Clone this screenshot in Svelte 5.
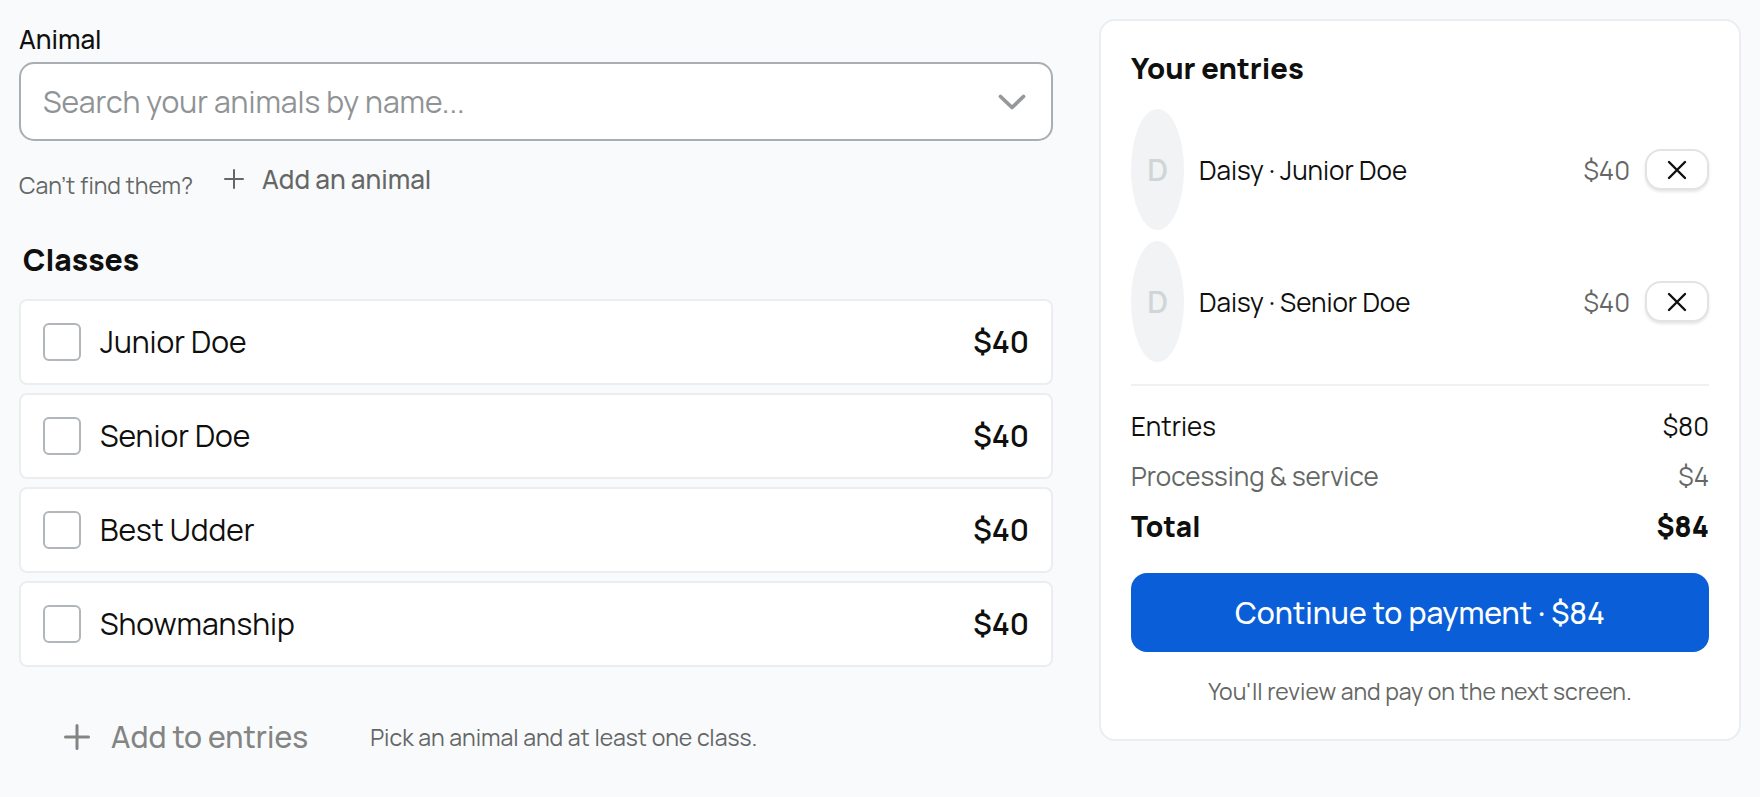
<script>
  let classes = $state([
    { id: 'junior', name: 'Junior Doe', price: 40, checked: false },
    { id: 'senior', name: 'Senior Doe', price: 40, checked: false },
    { id: 'udder', name: 'Best Udder', price: 40, checked: false },
    { id: 'showmanship', name: 'Showmanship', price: 40, checked: false }
  ]);
  const entries = [
    { animal: 'Daisy', className: 'Junior Doe', price: 40 },
    { animal: 'Daisy', className: 'Senior Doe', price: 40 }
  ];
  const subtotal = entries.reduce((sum, e) => sum + e.price, 0);
  const fee = 4;
</script>

<main class="page">
  <form class="picker" onsubmit={(e) => e.preventDefault()}>
    <label class="field-label" for="animal">Animal</label>
    <div class="combo">
      <input id="animal" type="text" role="combobox" aria-expanded="false" aria-controls="animal-list" placeholder="Search your animals by name..." />
      <svg class="chevron" viewBox="0 0 28 16" aria-hidden="true"><path d="M2.5 2.5 14 13.5 25.5 2.5" /></svg>
    </div>
    <div class="missing">
      <span class="small">Can’t find them?</span>
      <button type="button" class="ghost">
        <svg class="plus" viewBox="0 0 20 20" aria-hidden="true"><path d="M10 1V19M1 10H19" /></svg>
        Add an animal
      </button>
    </div>

    <h2 class="classes-title">Classes</h2>
    <ul class="classes">
      {#each classes as c (c.id)}
        <li>
          <label class="class-row" for={c.id}>
            <input id={c.id} type="checkbox" bind:checked={c.checked} />
            <span class="class-name">{c.name}</span>
            <span class="class-price">${c.price}</span>
          </label>
        </li>
      {/each}
    </ul>

    <div class="actions">
      <button type="submit" class="ghost large" disabled>
        <svg class="plus" viewBox="0 0 26 26" aria-hidden="true"><path d="M13 1.5V24.5M1.5 13H24.5" /></svg>
        Add to entries
      </button>
      <span class="small">Pick an animal and at least one class.</span>
    </div>
  </form>

  <aside class="card">
    <h2>Your entries</h2>
    <ul class="entries">
      {#each entries as e}
        <li>
          <span class="avatar">{e.animal[0]}</span>
          <span class="entry-name">{e.animal} · {e.className}</span>
          <span class="entry-price">${e.price}</span>
          <button type="button" class="remove" aria-label="Remove {e.animal} {e.className}">
            <svg viewBox="0 0 20 20" aria-hidden="true"><path d="M2 2 18 18M18 2 2 18" /></svg>
          </button>
        </li>
      {/each}
    </ul>
    <dl class="totals">
      <div><dt>Entries</dt><dd>${subtotal}</dd></div>
      <div class="muted"><dt>Processing &amp; service</dt><dd>${fee}</dd></div>
      <div class="total"><dt>Total</dt><dd>${subtotal + fee}</dd></div>
    </dl>
    <button type="button" class="pay">Continue to payment · ${subtotal + fee}</button>
    <p class="small note">You'll review and pay on the next screen.</p>
  </aside>
</main>

<style>
  :global(body) {
    background: #f9fafc;
  }
  .page {
    box-sizing: border-box;
    display: grid;
    grid-template-columns: minmax(0, 1034fr) minmax(0, 642fr);
    gap: 46px;
    align-items: start;
    padding: 19px;
    font-family: Manrope, Inter, sans-serif;
    font-size: 26px;
    line-height: 40px;
    color: #0f0f0e;
  }
  h2, ul, dl, dd, p {
    margin: 0;
    padding: 0;
  }
  ul {
    list-style: none;
  }
  h2 {
    font-size: 29px;
    font-weight: 800;
    line-height: 40px;
  }
  button, input {
    box-sizing: border-box;
    margin: 0;
    font: inherit;
  }
  svg {
    flex: none;
    fill: none;
    stroke: currentColor;
    stroke-linecap: round;
    stroke-linejoin: round;
  }
  .small {
    font-size: 23px;
    line-height: 32px;
    color: #646765;
  }
  .picker {
    display: flex;
    flex-direction: column;
  }
  .field-label {
    margin-bottom: 3px;
    font-weight: 500;
  }
  .combo {
    box-sizing: border-box;
    display: flex;
    align-items: center;
    height: 79px;
    padding: 0 25px 0 22px;
    border: 2px solid #a9aeb2;
    border-radius: 15px;
    background: #fff;
  }
  .combo input {
    flex: 1;
    min-width: 0;
    padding: 0;
    border: 0;
    outline: 0;
    background: transparent;
    font-size: 30px;
    color: inherit;
  }
  .combo input::placeholder {
    color: #909395;
    opacity: 1;
  }
  .chevron {
    width: 28px;
    height: 16px;
    stroke-width: 3.8;
    color: #96999b;
  }
  .missing {
    display: flex;
    align-items: end;
    gap: 31px;
    height: 60px;
  }
  .ghost {
    display: flex;
    align-items: center;
    gap: 18px;
    padding: 0;
    border: 0;
    background: transparent;
    font-weight: 500;
    color: #646765;
  }
  .missing .ghost {
    padding-bottom: 2px;
  }
  .missing .plus {
    width: 20px;
    height: 20px;
    stroke-width: 2;
  }
  .classes-title {
    margin: 39px 4px 19px;
    font-size: 30px;
  }
  .classes {
    display: grid;
    gap: 8px;
  }
  .class-row {
    box-sizing: border-box;
    display: flex;
    align-items: center;
    gap: 19px;
    height: 86px;
    padding: 0 22px;
    border: 2px solid #ebedef;
    border-radius: 8px;
    background: #fff;
    font-size: 30px;
  }
  .class-row input {
    appearance: none;
    width: 38px;
    height: 38px;
    border: 2px solid #b1b6ba;
    border-radius: 6px;
    background: #fff;
  }
  .class-row input:checked {
    border-color: #0a5fd8;
    background: #0a5fd8;
  }
  .class-name {
    flex: 1;
  }
  .class-price {
    font-weight: 600;
  }
  .actions {
    display: flex;
    align-items: center;
    gap: 62px;
    padding: 50px 45px 0;
  }
  .large {
    gap: 21px;
    font-size: 30px;
    color: #838583;
  }
  .large .plus {
    width: 26px;
    height: 26px;
    stroke-width: 3;
  }
  .card {
    display: flex;
    flex-direction: column;
    padding: 27px 30px 32px;
    border: 2px solid #ebedef;
    border-radius: 16px;
    background: #fff;
  }
  .entries {
    display: grid;
    gap: 11px;
    margin-top: 21px;
    padding-bottom: 22px;
    border-bottom: 2px solid #f0f1f3;
  }
  .entries li {
    display: flex;
    align-items: center;
    gap: 15px;
  }
  .avatar {
    display: grid;
    place-items: center;
    width: 53px;
    height: 121px;
    border-radius: 50%;
    background: #f2f3f5;
    font-size: 30px;
    font-weight: 600;
    color: #d0d6d7;
  }
  .entry-name {
    flex: 1;
  }
  .entry-price {
    color: #646765;
  }
  .remove {
    display: grid;
    place-items: center;
    width: 64px;
    height: 41px;
    padding: 0;
    border: 2px solid #e0e4e4;
    border-radius: 16px;
    background: #fff;
    box-shadow: 0 2px 3px rgb(0 0 0 / 0.1);
    color: #0f0f0e;
  }
  .remove svg {
    width: 20px;
    height: 20px;
    stroke-width: 2.4;
  }
  .totals {
    display: grid;
    gap: 10px;
    padding: 20px 0 27px;
  }
  .totals div {
    display: flex;
    justify-content: space-between;
  }
  .totals .muted {
    color: #646765;
  }
  .totals .total {
    font-size: 28px;
    font-weight: 800;
  }
  .pay {
    height: 79px;
    border: 0;
    border-radius: 16px;
    background: #0a5fd8;
    font-size: 30px;
    font-weight: 500;
    color: #fff;
  }
  .note {
    margin-top: 23px;
    text-align: center;
  }
</style>
